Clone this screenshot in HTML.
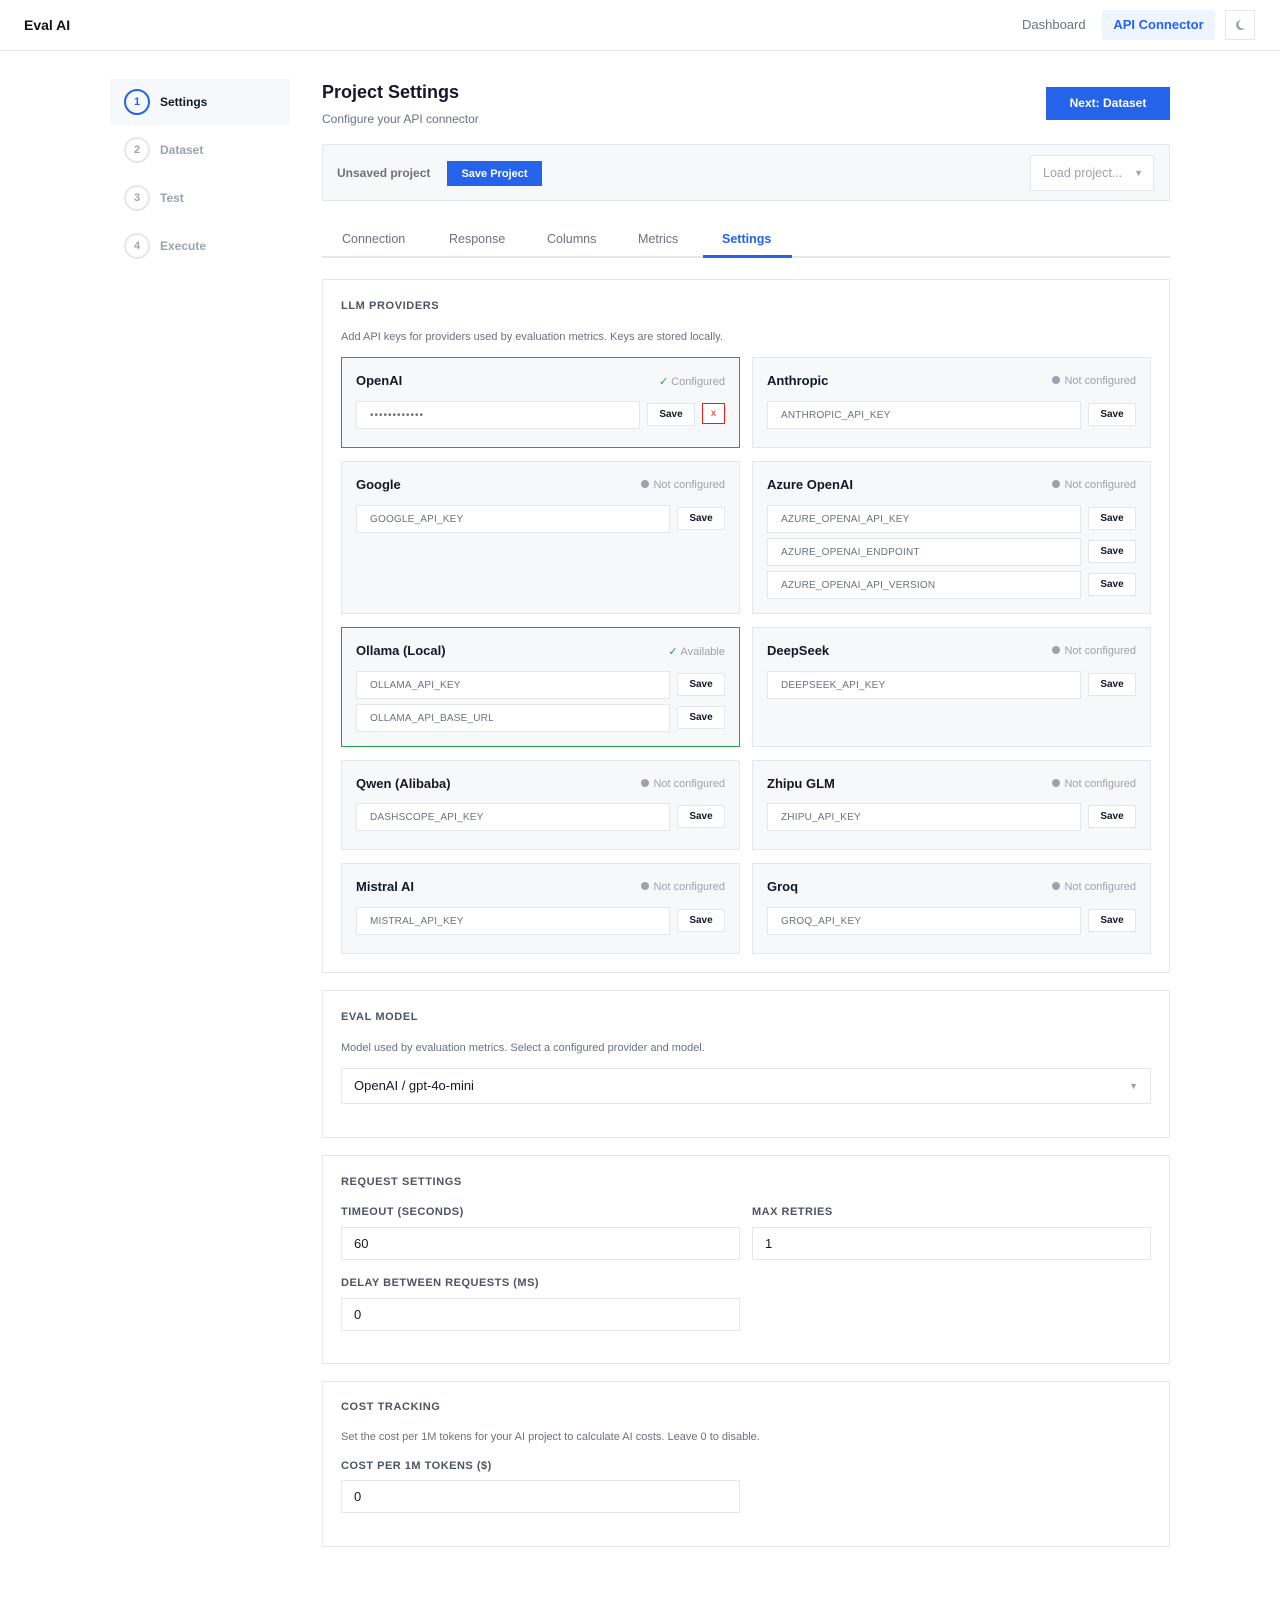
<!DOCTYPE html>
<html><head><meta charset="utf-8"><style>
*{box-sizing:border-box;margin:0;padding:0}
body{width:1280px;height:1624px;background:#fff;font-family:"Liberation Sans",sans-serif;color:#111827;position:relative;overflow:hidden}
.a{position:absolute}
.hdr{left:0;top:0;width:1280px;height:51px;border-bottom:1px solid #e5e7eb}
.sec{position:absolute;left:322px;width:848px;border:1px solid #e5e7eb;background:#fff}
.h{position:absolute;left:18px;font-size:11px;font-weight:700;letter-spacing:.6px;color:#4b5563}
.d{position:absolute;left:18px;font-size:11px;color:#6b7280}
.card{position:absolute;width:399px;background:#f7f8fa;border:1px solid #e5e7eb}
.card.g{border-color:#22a04b}
.ct{position:absolute;left:14px;top:15px;font-size:13px;font-weight:700;color:#111827}
.st{position:absolute;right:14px;top:17px;font-size:11px;color:#9ca3af}
.dot{display:inline-block;width:8px;height:8px;border-radius:50%;background:#9ca3af;margin-right:4px;vertical-align:-0px}
.ok{color:#22a04b;margin-right:3px}
.in{position:absolute;left:14px;height:28px;background:#fff;border:1px solid #e5e7eb;font-size:10px;color:#6b7280;padding-left:13px;line-height:28px;letter-spacing:.2px}
.sv{position:absolute;width:48px;height:23px;background:#fff;border:1px solid #e5e7eb;font-size:10px;font-weight:700;color:#111827;text-align:center;line-height:22px}
.lab{position:absolute;font-size:11px;font-weight:700;letter-spacing:.5px;color:#4b5563}
.fi{position:absolute;height:33px;border:1px solid #e5e7eb;background:#fff;font-size:13px;padding-left:12px;line-height:31px}
.step{position:absolute;left:124px;width:26px;height:26px;border-radius:50%;border:2px solid #e5e7eb;font-size:11px;color:#9ca3af;text-align:center;line-height:22px;font-weight:700}
.sl{position:absolute;left:160px;font-size:12px;color:#9ca3af;font-weight:700}
.tab{position:absolute;top:232px;font-size:12.5px;color:#6b7280}
</style></head><body>
<div class="a hdr"></div>
<div class="a" style="left:24px;top:17px;font-size:14px;font-weight:700;color:#111">Eval AI</div>
<div class="a" style="left:1022px;top:17px;font-size:13px;color:#6b7280">Dashboard</div>
<div class="a" style="left:1102px;top:10px;width:113px;height:30px;background:#eef5ff;color:#2563eb;font-size:13px;font-weight:700;text-align:center;line-height:30px">API Connector</div>
<div class="a" style="left:1225px;top:10px;width:30px;height:30px;border:1px solid #e5e7eb"><svg width="28" height="28" viewBox="0 0 28 28"><path d="M15 9a5 5 0 1 0 4 8a4.2 4.2 0 0 1-4-8z" fill="#9ca3af"/></svg></div>

<div class="a" style="left:110px;top:79px;width:180px;height:46px;background:#f7f8fa"></div>
<div class="step" style="top:89px;border-color:#2563eb;color:#2563eb">1</div><div class="sl" style="top:95px;color:#111827">Settings</div>
<div class="step" style="top:137px">2</div><div class="sl" style="top:143px">Dataset</div>
<div class="step" style="top:185px">3</div><div class="sl" style="top:191px">Test</div>
<div class="step" style="top:233px">4</div><div class="sl" style="top:239px">Execute</div>

<div class="a" style="left:322px;top:82px;font-size:18px;font-weight:700">Project Settings</div>
<div class="a" style="left:322px;top:112px;font-size:12px;color:#6b7280">Configure your API connector</div>
<div class="a" style="left:1046px;top:87px;width:124px;height:33px;background:#2563eb;color:#fff;font-size:12px;font-weight:700;text-align:center;line-height:33px">Next: Dataset</div>

<div class="a" style="left:322px;top:144px;width:848px;height:57px;background:#f7f8fa;border:1px solid #e5e7eb"></div>
<div class="a" style="left:337px;top:166px;font-size:12px;color:#6b7280;font-weight:700">Unsaved project</div>
<div class="a" style="left:447px;top:161px;width:95px;height:25px;background:#2563eb;color:#fff;font-size:11px;font-weight:700;text-align:center;line-height:26px">Save Project</div>
<div class="a" style="left:1030px;top:155px;width:124px;height:36px;background:#fff;border:1px solid #e5e7eb;font-size:12.5px;color:#9ca3af;padding-left:12px;line-height:34px">Load project... <span style="position:absolute;right:10px;font-size:9px">▼</span></div>

<div class="a" style="left:322px;top:256px;width:848px;height:2px;background:#e5e7eb"></div>
<div class="a" style="left:703px;top:255px;width:89px;height:3px;background:#2563eb"></div>
<div class="tab" style="left:342px">Connection</div>
<div class="tab" style="left:449px">Response</div>
<div class="tab" style="left:547px">Columns</div>
<div class="tab" style="left:638px">Metrics</div>
<div class="tab" style="left:722px;color:#2563eb;font-weight:700">Settings</div>

<div class="sec" style="top:279px;height:694px">
<div class="h" style="top:20px">LLM PROVIDERS</div>
<div class="d" style="top:51px">Add API keys for providers used by evaluation metrics. Keys are stored locally.</div>
</div>

<div class="card g" style="left:341px;top:357px;height:91px"><div class="ct">OpenAI</div><div class="st"><span class="ok">✓</span>Configured</div>
<div class="in" style="top:43px;width:284px;letter-spacing:1px">••••••••••••</div><div class="sv" style="left:305px;top:45px">Save</div>
<div class="a" style="left:360px;top:45px;width:23px;height:21px;border:1px solid #dc2626;background:#fff;color:#dc2626;font-size:10px;text-align:center;line-height:20px">x</div></div>

<div class="card" style="left:752px;top:357px;height:91px"><div class="ct">Anthropic</div><div class="st"><span class="dot"></span>Not configured</div>
<div class="in" style="top:43px;width:314px">ANTHROPIC_API_KEY</div><div class="sv" style="left:335px;top:45px">Save</div></div>

<div class="card" style="left:341px;top:461px;height:153px"><div class="ct">Google</div><div class="st"><span class="dot"></span>Not configured</div>
<div class="in" style="top:43px;width:314px">GOOGLE_API_KEY</div><div class="sv" style="left:335px;top:45px">Save</div></div>

<div class="card" style="left:752px;top:461px;height:153px"><div class="ct">Azure OpenAI</div><div class="st"><span class="dot"></span>Not configured</div>
<div class="in" style="top:43px;width:314px">AZURE_OPENAI_API_KEY</div><div class="sv" style="left:335px;top:45px">Save</div>
<div class="in" style="top:76px;width:314px">AZURE_OPENAI_ENDPOINT</div><div class="sv" style="left:335px;top:78px">Save</div>
<div class="in" style="top:109px;width:314px">AZURE_OPENAI_API_VERSION</div><div class="sv" style="left:335px;top:111px">Save</div></div>

<div class="card g" style="left:341px;top:627px;height:120px"><div class="ct">Ollama (Local)</div><div class="st"><span class="ok">✓</span>Available</div>
<div class="in" style="top:43px;width:314px">OLLAMA_API_KEY</div><div class="sv" style="left:335px;top:45px">Save</div>
<div class="in" style="top:76px;width:314px">OLLAMA_API_BASE_URL</div><div class="sv" style="left:335px;top:78px">Save</div></div>

<div class="card" style="left:752px;top:627px;height:120px"><div class="ct">DeepSeek</div><div class="st"><span class="dot"></span>Not configured</div>
<div class="in" style="top:43px;width:314px">DEEPSEEK_API_KEY</div><div class="sv" style="left:335px;top:45px">Save</div></div>

<div class="card" style="left:341px;top:760px;height:90px"><div class="ct">Qwen (Alibaba)</div><div class="st"><span class="dot"></span>Not configured</div>
<div class="in" style="top:42px;width:314px">DASHSCOPE_API_KEY</div><div class="sv" style="left:335px;top:44px">Save</div></div>

<div class="card" style="left:752px;top:760px;height:90px"><div class="ct">Zhipu GLM</div><div class="st"><span class="dot"></span>Not configured</div>
<div class="in" style="top:42px;width:314px">ZHIPU_API_KEY</div><div class="sv" style="left:335px;top:44px">Save</div></div>

<div class="card" style="left:341px;top:863px;height:91px"><div class="ct">Mistral AI</div><div class="st"><span class="dot"></span>Not configured</div>
<div class="in" style="top:43px;width:314px">MISTRAL_API_KEY</div><div class="sv" style="left:335px;top:45px">Save</div></div>

<div class="card" style="left:752px;top:863px;height:91px"><div class="ct">Groq</div><div class="st"><span class="dot"></span>Not configured</div>
<div class="in" style="top:43px;width:314px">GROQ_API_KEY</div><div class="sv" style="left:335px;top:45px">Save</div></div>

<div class="sec" style="top:990px;height:148px">
<div class="h" style="top:20px">EVAL MODEL</div>
<div class="d" style="top:51px">Model used by evaluation metrics. Select a configured provider and model.</div>
<div class="fi" style="left:18px;top:77px;width:810px;height:36px;line-height:34px">OpenAI / gpt-4o-mini<span style="position:absolute;right:12px;font-size:9px;color:#9ca3af">▼</span></div>
</div>

<div class="sec" style="top:1155px;height:209px">
<div class="h" style="top:20px">REQUEST SETTINGS</div>
<div class="lab" style="left:18px;top:50px">TIMEOUT (SECONDS)</div>
<div class="lab" style="left:429px;top:50px">MAX RETRIES</div>
<div class="fi" style="left:18px;top:71px;width:399px">60</div>
<div class="fi" style="left:429px;top:71px;width:399px">1</div>
<div class="lab" style="left:18px;top:121px">DELAY BETWEEN REQUESTS (MS)</div>
<div class="fi" style="left:18px;top:142px;width:399px">0</div>
</div>

<div class="sec" style="top:1381px;height:166px">
<div class="h" style="top:19px">COST TRACKING</div>
<div class="d" style="top:49px">Set the cost per 1M tokens for your AI project to calculate AI costs. Leave 0 to disable.</div>
<div class="lab" style="left:18px;top:78px">COST PER 1M TOKENS ($)</div>
<div class="fi" style="left:18px;top:98px;width:399px">0</div>
</div>
</body></html>
